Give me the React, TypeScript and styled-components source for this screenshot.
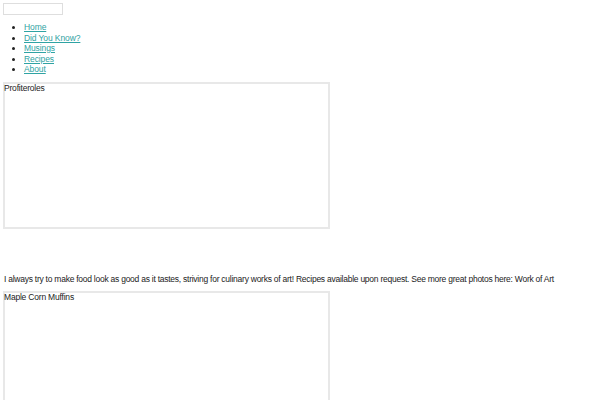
import React from "react";
import styled, { createGlobalStyle } from "styled-components";

const Global = createGlobalStyle`
  html, body { margin: 0; padding: 0; background: #fff; }
  body { font-family: "Liberation Sans", Arial, sans-serif; color: #222; }
`;

const Page = styled.div`
  padding: 3px 3px 0 3px;
  font-size: 8px;
  line-height: 10.5px;
`;

const Search = styled.input`
  display: block;
  box-sizing: border-box;
  width: 60px;
  height: 12px;
  margin: 0;
  padding: 0;
  border: 1px solid #dedede;
  background: #fff;
`;

const Nav = styled.ul`
  margin: 7px 0 0 0;
  padding: 0 0 0 21px;
  list-style: disc;
`;

const NavItem = styled.li`
  font-size: 8.5px;
  line-height: 10.5px;
`;

const NavLink = styled.a`
  color: #2fa3a3;
  text-decoration: underline;
  letter-spacing: -0.1px;
`;

const Frame = styled.div<{ $top: number }>`
  box-sizing: border-box;
  width: 327px;
  height: 147px;
  margin-top: ${(p) => p.$top}px;
  border: 2px solid #e8e8e8;
  padding: 0;
`;

const Caption = styled.div`
  font-size: 8.5px;
  line-height: 10px;
  margin: -1px 0 0 -1px;
  letter-spacing: -0.2px;
`;

const Para = styled.p`
  margin: 45px 0 0 1px;
  font-size: 8.5px;
  line-height: 10px;
  letter-spacing: -0.25px;
  white-space: nowrap;
`;

export default function App() {
  return (
    <>
      <Global />
      <Page>
        <Search type="text" />
        <Nav>
          {["Home", "Did You Know?", "Musings", "Recipes", "About"].map((t) => (
            <NavItem key={t}>
              <NavLink href="#">{t}</NavLink>
            </NavItem>
          ))}
        </Nav>
        <Frame $top={7}>
          <Caption>Profiteroles</Caption>
        </Frame>
        <Para>
          I always try to make food look as good as it tastes, striving for culinary works of art! Recipes available upon request. See more great photos here: Work of Art
        </Para>
        <Frame $top={7}>
          <Caption>Maple Corn Muffins</Caption>
        </Frame>
      </Page>
    </>
  );
}
